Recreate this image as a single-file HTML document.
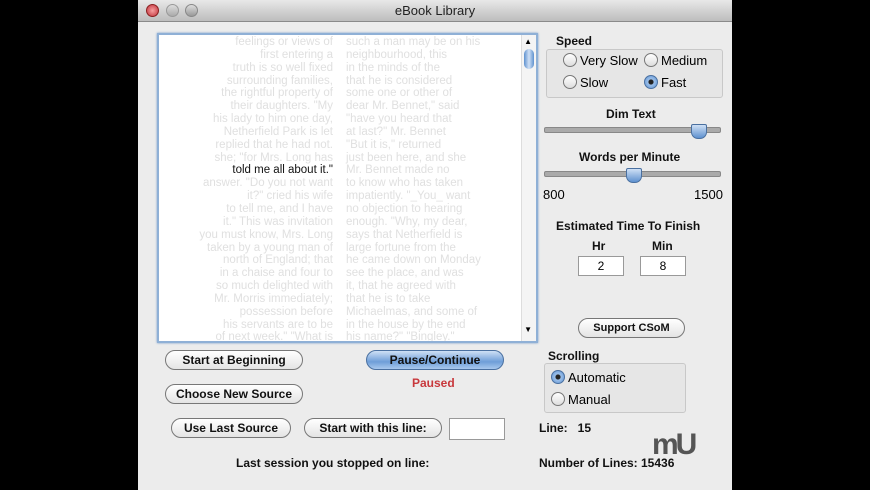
<!DOCTYPE html>
<html><head><style>
body{margin:0;width:870px;height:490px;background:#000;position:relative;overflow:hidden;font-family:"Liberation Sans",sans-serif;}
#win{position:absolute;left:138px;top:0;width:594px;height:490px;background:#ececec;}
#title{position:absolute;left:0;top:0;width:594px;height:21px;background:linear-gradient(#e8e8e8,#bdbdbd);border-bottom:1px solid #8a8a8a;text-align:center;font-size:13px;line-height:21px;color:#222;}
.tl{position:absolute;top:4px;width:13px;height:13px;border-radius:50%;}
.a{position:absolute;}
#ta{position:absolute;left:19px;top:33px;width:377px;height:306px;background:#fff;border:2px solid #8fb0d6;box-shadow:0 0 2px #6b95c8;overflow:hidden;}
.col{position:absolute;top:1px;font-size:11.5px;line-height:12.85px;color:#e0e0e0;white-space:nowrap;}
.b{font-weight:bold;font-size:12px;color:#111;}
.btn{position:absolute;height:18px;border:1px solid #777;border-radius:10px;background:linear-gradient(#fff,#e4e4e4);font-weight:bold;font-size:12px;text-align:center;line-height:18px;color:#111;}
.radio{display:inline-block;width:12px;height:12px;border:1px solid #777;border-radius:50%;background:linear-gradient(#fff,#ddd);vertical-align:-2px;margin-right:3px;position:relative;}
.on{background:radial-gradient(#222 25%,#9cc0ea 35%,#5f92d2);border-color:#4a70a0;}
.box{position:absolute;border:1px solid #c8c8c8;background:#e6e6e6;border-radius:3px;}
.track{position:absolute;height:4px;border-radius:2px;background:#aaa;border:1px solid #888;}
.thumb{position:absolute;width:14px;height:13px;background:linear-gradient(#cfe0f5,#5e91cf);border:1px solid #4a70a0;border-radius:2px 2px 7px 7px;}
.fld{position:absolute;background:#fff;border:1px solid #999;font-size:12px;text-align:center;line-height:18px;}
</style></head><body>
<div id="win">
<div id="title">eBook Library</div>
<div class="tl" style="left:8px;background:radial-gradient(#f7a0a0,#c0303a);border:1px solid #8a2020;width:11px;height:11px"></div>
<div class="tl" style="left:28px;background:linear-gradient(#ddd,#aaa);border:1px solid #999;width:11px;height:11px"></div>
<div class="tl" style="left:47px;background:linear-gradient(#ddd,#999);border:1px solid #888;width:11px;height:11px"></div>
<div id="ta">
<div class="col" style="right:203px;text-align:right">feelings or views of<br>first entering a<br>truth is so well fixed<br>surrounding families,<br>the rightful property of<br>their daughters. "My<br>his lady to him one day,<br>Netherfield Park is let<br>replied that he had not.<br>she; "for Mrs. Long has<br><span style="color:#111">told me all about it."</span><br>answer. "Do you not want<br>it?" cried his wife<br>to tell me, and I have<br>it." This was invitation<br>you must know, Mrs. Long<br>taken by a young man of<br>north of England; that<br>in a chaise and four to<br>so much delighted with<br>Mr. Morris immediately;<br>possession before<br>his servants are to be<br>of next week." "What is</div>
<div class="col" style="left:187px">such a man may be on his<br>neighbourhood, this<br>in the minds of the<br>that he is considered<br>some one or other of<br>dear Mr. Bennet," said<br>"have you heard that<br>at last?" Mr. Bennet<br>"But it is," returned<br>just been here, and she<br>Mr. Bennet made no<br>to know who has taken<br>impatiently. "_You_ want<br>no objection to hearing<br>enough. "Why, my dear,<br>says that Netherfield is<br>large fortune from the<br>he came down on Monday<br>see the place, and was<br>it, that he agreed with<br>that he is to take<br>Michaelmas, and some of<br>in the house by the end<br>his name?" "Bingley."</div>
<div style="position:absolute;right:0;top:0;width:14px;height:306px;background:#f4f4f4;border-left:1px solid #ddd"></div>
<div style="position:absolute;right:4px;top:2px;font-size:8px">▲</div>
<div style="position:absolute;right:2px;top:14px;width:10px;height:20px;border-radius:5px;background:linear-gradient(90deg,#5e91cf,#cfe0f5,#5e91cf)"></div>
<div style="position:absolute;right:4px;top:290px;font-size:8px">▼</div>
</div>
<div class="a b" style="left:418px;top:34px">Speed</div>
<div class="box" style="left:408px;top:49px;width:175px;height:47px"></div>
<div class="a" style="left:425px;top:53px;font-size:13px"><span class="radio"></span>Very Slow</div>
<div class="a" style="left:506px;top:53px;font-size:13px"><span class="radio"></span>Medium</div>
<div class="a" style="left:425px;top:75px;font-size:13px"><span class="radio"></span>Slow</div>
<div class="a" style="left:506px;top:75px;font-size:13px"><span class="radio on"></span>Fast</div>
<div class="a b" style="left:468px;top:107px">Dim Text</div>
<div class="track" style="left:406px;top:127px;width:175px"></div>
<div class="thumb" style="left:553px;top:124px"></div>
<div class="a b" style="left:441px;top:150px">Words per Minute</div>
<div class="track" style="left:406px;top:171px;width:175px"></div>
<div class="thumb" style="left:488px;top:168px"></div>
<div class="a" style="left:405px;top:187px;font-size:13px">800</div>
<div class="a" style="left:556px;top:187px;font-size:13px">1500</div>
<div class="a b" style="left:418px;top:219px">Estimated Time To Finish</div>
<div class="a b" style="left:454px;top:239px">Hr</div>
<div class="a b" style="left:514px;top:239px">Min</div>
<div class="fld" style="left:440px;top:256px;width:44px;height:18px">2</div>
<div class="fld" style="left:502px;top:256px;width:44px;height:18px">8</div>
<div class="btn" style="left:440px;top:318px;width:105px;font-size:11px">Support CSoM</div>
<div class="btn" style="left:27px;top:350px;width:136px">Start at Beginning</div>
<div class="btn" style="left:228px;top:350px;width:136px;background:linear-gradient(#cfe0f5,#6e9ed8 60%,#a8c8ee);border-color:#4a70a0">Pause/Continue</div>
<div class="a b" style="left:274px;top:376px;color:#c8383c">Paused</div>
<div class="btn" style="left:27px;top:384px;width:136px">Choose New Source</div>
<div class="btn" style="left:33px;top:418px;width:118px">Use Last Source</div>
<div class="btn" style="left:166px;top:418px;width:136px">Start with this line:</div>
<div class="fld" style="left:311px;top:418px;width:54px;height:20px"></div>
<div class="a b" style="left:410px;top:349px">Scrolling</div>
<div class="box" style="left:406px;top:363px;width:140px;height:48px"></div>
<div class="a" style="left:413px;top:370px;font-size:13px"><span class="radio on"></span>Automatic</div>
<div class="a" style="left:413px;top:392px;font-size:13px"><span class="radio"></span>Manual</div>
<div class="a b" style="left:401px;top:421px">Line:&nbsp;&nbsp; 15</div>
<div class="a b" style="left:98px;top:456px">Last session you stopped on line:</div>
<div class="a b" style="left:401px;top:456px">Number of Lines: 15436</div>
<div class="a" style="left:514px;top:428px;font-size:30px;font-weight:bold;color:#555;letter-spacing:-3px">mU</div>
</div>
</body></html>
